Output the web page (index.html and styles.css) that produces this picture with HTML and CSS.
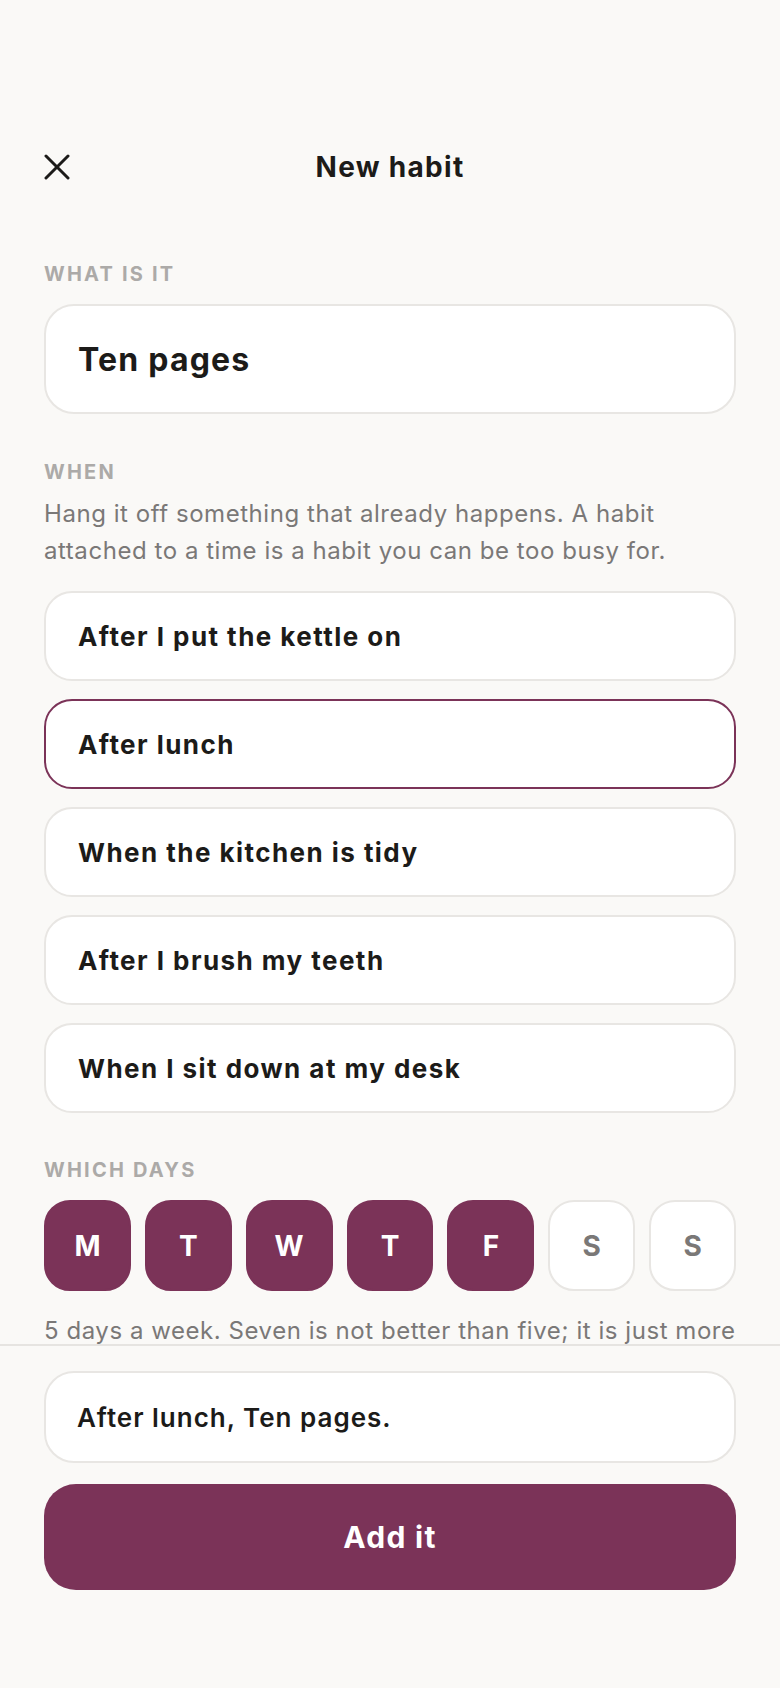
FILE: index.html
```html
<!DOCTYPE html>
<html lang="en">
<head>
<meta charset="utf-8">
<title>New habit</title>
<link rel="stylesheet" href="styles.css">
</head>
<body>
<div class="screen">
  <main class="content">
    <header class="topbar">
      <button class="close" aria-label="Close">
        <svg width="26" height="26" viewBox="0 0 26 26" fill="none" stroke="#1c1b19" stroke-width="3" stroke-linecap="round">
          <line x1="2" y1="2" x2="24" y2="24"/>
          <line x1="24" y1="2" x2="2" y2="24"/>
        </svg>
      </button>
      <h1 class="title">New habit</h1>
      <span></span>
    </header>

    <section class="block block-what">
      <div class="label">WHAT IS IT</div>
      <div class="field">Ten pages</div>
    </section>

    <section class="block block-when">
      <div class="label">WHEN</div>
      <p class="hint">Hang it off something that already happens. A habit<br>attached to a time is a habit you can be too busy for.</p>
      <div class="options">
        <div class="option">After I put the kettle on</div>
        <div class="option selected">After lunch</div>
        <div class="option">When the kitchen is tidy</div>
        <div class="option">After I brush my teeth</div>
        <div class="option">When I sit down at my desk</div>
      </div>
    </section>

    <section class="block block-days">
      <div class="label">WHICH DAYS</div>
      <div class="days">
        <div class="day on">M</div>
        <div class="day on">T</div>
        <div class="day on">W</div>
        <div class="day on">T</div>
        <div class="day on">F</div>
        <div class="day">S</div>
        <div class="day">S</div>
      </div>
      <p class="hint caption">5 days a week. Seven is not better than five; it is just more</p>
    </section>
  </main>

  <footer class="footer">
    <div class="preview">After lunch, Ten pages.</div>
    <button class="add">Add it</button>
  </footer>
</div>
</body>
</html>
```

FILE: styles.css
```css
* { box-sizing: border-box; }

html, body {
  margin: 0;
  padding: 0;
  background: #faf9f7;
}

body {
  font-family: Inter, "Noto Sans", "Liberation Sans", sans-serif;
  color: #1c1b19;
}

button {
  font-family: inherit;
}

.screen {
  height: 1688px;
  display: flex;
  flex-direction: column;
}

.content {
  height: 1344px;
  flex: 0 0 1344px;
  overflow: hidden;
  padding: 0 44px;
}

.topbar {
  margin-top: 135px;
  height: 64px;
  display: grid;
  grid-template-columns: 1fr auto 1fr;
  align-items: center;
}

.close {
  justify-self: start;
  width: 26px;
  height: 26px;
  padding: 0;
  border: 0;
  background: none;
  display: flex;
}

.title {
  margin: 0;
  font-size: 28px;
  font-weight: 700;
  line-height: 34px;
  letter-spacing: 1.3px;
}

.label {
  font-size: 20px;
  line-height: 24px;
  font-weight: 700;
  letter-spacing: 2.2px;
  color: #acaaa8;
}

.block-what { margin-top: 63px; }

.field {
  margin-top: 18px;
  height: 110px;
  background: #fff;
  border: 2px solid #e8e6e3;
  border-radius: 30px;
  padding: 0 32px;
  display: flex;
  align-items: center;
  font-size: 32px;
  font-weight: 700;
  letter-spacing: 1.2px;
}

.block-when { margin-top: 46px; }

.hint {
  margin: 11px 0 0;
  font-size: 24px;
  line-height: 37px;
  letter-spacing: 0.55px;
  color: #7a7877;
}

.options {
  margin-top: 22px;
  display: flex;
  flex-direction: column;
  gap: 18px;
}

.option {
  height: 90px;
  background: #fff;
  border: 2px solid #e8e6e3;
  border-radius: 28px;
  padding: 0 32px;
  display: flex;
  align-items: center;
  font-size: 26px;
  font-weight: 700;
  letter-spacing: 1.45px;
}

.option.selected {
  border-color: #7b3358;
}

.block-days { margin-top: 45px; }

.days {
  margin-top: 18px;
  display: grid;
  grid-template-columns: repeat(7, 1fr);
  gap: 14px;
}

.day {
  height: 91px;
  border-radius: 26px;
  background: #fff;
  border: 2px solid #e8e6e3;
  display: flex;
  align-items: center;
  justify-content: center;
  font-size: 28px;
  font-weight: 700;
  color: #7a7877;
}

.day.on {
  background: #7b3358;
  border-color: #7b3358;
  color: #fff;
}

.caption {
  margin-top: 21px;
  white-space: nowrap;
}

.footer {
  flex: 1;
  border-top: 2px solid #e6e4e1;
  background: #faf9f7;
  padding: 25px 44px 0;
  display: flex;
  flex-direction: column;
  gap: 21px;
}

.preview {
  height: 92px;
  background: #fff;
  border: 2px solid #e8e6e3;
  border-radius: 30px;
  padding: 0 31px;
  display: flex;
  align-items: center;
  font-size: 26px;
  font-weight: 600;
  letter-spacing: 1px;
}

.add {
  height: 106px;
  border: 0;
  border-radius: 32px;
  background: #7b3358;
  color: #fff;
  font-size: 30px;
  font-weight: 700;
  letter-spacing: 1.3px;
}
```
